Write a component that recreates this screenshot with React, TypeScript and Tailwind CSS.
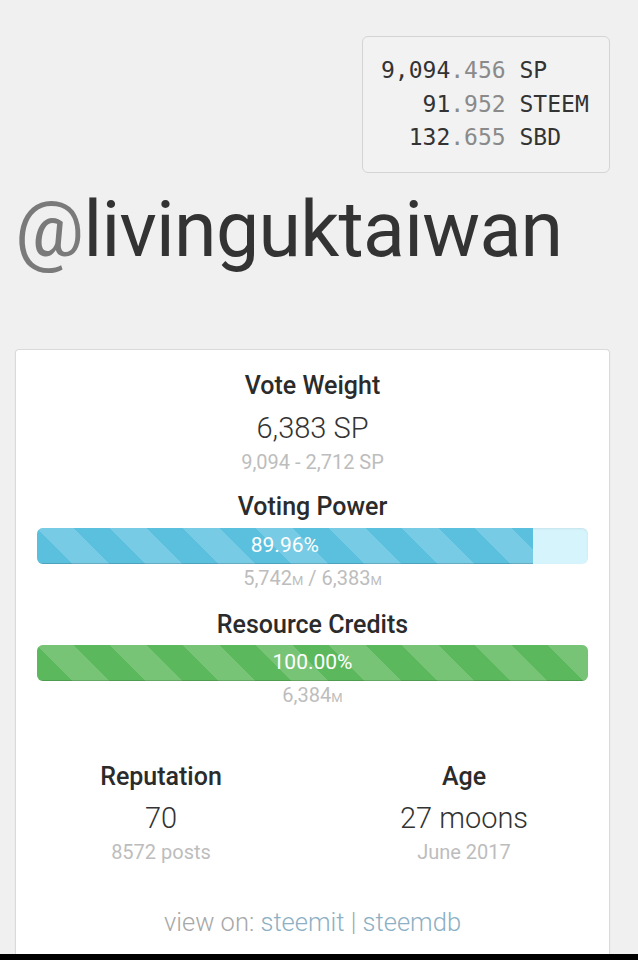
import React from "react";

const stripes =
  "bg-[linear-gradient(45deg,rgba(255,255,255,0.17)_25%,transparent_25%,transparent_50%,rgba(255,255,255,0.17)_50%,rgba(255,255,255,0.17)_75%,transparent_75%,transparent)] bg-size-[73px_73px]";

function Bar({ pct, label, color, track }: { pct: number; label: string; color: string; track: string }) {
  return (
    <div className={`h-[36px] rounded-[6px] overflow-hidden flex ${track} shadow-[inset_0_1px_2px_rgba(0,0,0,0.08)]`}>
      <div
        className={`h-full ${color} ${stripes} flex items-center justify-center text-white text-[21px] leading-none shadow-[inset_0_-1px_0_rgba(0,0,0,0.15)]`}
        style={{ width: `${pct}%` }}
      >
        {label}
      </div>
    </div>
  );
}

export default function App() {
  const roboto = { fontFamily: "Roboto, 'Noto Sans', sans-serif" };
  return (
    <div className="w-[638px] h-[960px] overflow-hidden bg-[#f0f0f0] flex flex-col" style={roboto}>
      <div className="flex justify-end pt-[36px] pr-[28px]">
        <div
          className="w-[248px] border border-[#d4d4d4] rounded-[6px] bg-[#f2f2f2] py-[17px] pl-[18px] text-[23px] leading-[33.5px] text-[#333333] whitespace-pre"
          style={{ fontFamily: "'DejaVu Sans Mono', monospace" }}
        >
          <div>9,094<span className="text-[#8a8a8a]">.456</span> SP</div>
          <div>   91<span className="text-[#8a8a8a]">.952</span> STEEM</div>
          <div>  132<span className="text-[#8a8a8a]">.655</span> SBD</div>
        </div>
      </div>

      <div className="mt-[18px] pl-[15px] text-[77px] leading-[78px] text-[#333333] tracking-[-0.7px]">
        <span className="text-[#7a7a7a]">@</span>livinguktaiwan
      </div>

      <div className="mt-[80px] ml-[15px] w-[595px] flex-1 bg-white border border-b-0 border-[#dadada] rounded-t-[4px] shadow-[0_1px_2px_rgba(0,0,0,0.05)] flex flex-col text-center">
        <div className="px-[21px] pt-[20px] flex flex-col">
          <div className="h-[32px] leading-[32px] text-[25px] font-medium text-[#2b2b2b]">Vote Weight</div>
          <div className="mt-[9px] h-[35px] leading-[35px] text-[29px] font-light text-[#333]">6,383 SP</div>
          <div className="mt-[4px] h-[24px] leading-[24px] text-[20px] text-[#bdbdbd]">9,094 - 2,712 SP</div>

          <div className="mt-[17px] h-[32px] leading-[32px] text-[25px] font-medium text-[#2b2b2b]">Voting Power</div>
          <div className="mt-[5px]">
            <Bar pct={89.96} label="89.96%" color="bg-[#5bc0de]" track="bg-[#d6f4fc]" />
          </div>
          <div className="mt-[2px] h-[24px] leading-[24px] text-[20px] text-[#bdbdbd]">
            5,742<span className="text-[13px]">M</span> / 6,383<span className="text-[13px]">M</span>
          </div>

          <div className="mt-[19px] h-[32px] leading-[32px] text-[25px] font-medium text-[#2b2b2b]">Resource Credits</div>
          <div className="mt-[4px]">
            <Bar pct={100} label="100.00%" color="bg-[#5cb85c]" track="bg-[#e6f5e6]" />
          </div>
          <div className="mt-[2px] h-[24px] leading-[24px] text-[20px] text-[#bdbdbd]">
            6,384<span className="text-[13px]">M</span>
          </div>
        </div>

        <div className="mt-[54px] flex gap-[13px]">
          <div className="w-[290px] flex flex-col">
            <div className="h-[32px] leading-[32px] text-[25px] font-medium text-[#2b2b2b]">Reputation</div>
            <div className="mt-[7px] h-[36px] leading-[36px] text-[29px] font-light text-[#333]">70</div>
            <div className="mt-[4px] h-[24px] leading-[24px] text-[20px] text-[#bdbdbd]">8572 posts</div>
          </div>
          <div className="w-[290px] flex flex-col">
            <div className="h-[32px] leading-[32px] text-[25px] font-medium text-[#2b2b2b]">Age</div>
            <div className="mt-[7px] h-[36px] leading-[36px] text-[29px] font-light text-[#333]">27 moons</div>
            <div className="mt-[4px] h-[24px] leading-[24px] text-[20px] text-[#bdbdbd]">June 2017</div>
          </div>
        </div>

        <div className="mt-[43px] h-[30px] leading-[30px] text-[25.5px] font-light text-[#a8a8a8]">
          view on: <span className="text-[#8db0c4]">steemit</span> | <span className="text-[#8db0c4]">steemdb</span>
        </div>
      </div>
      <div className="h-[6px] bg-black shrink-0" />
    </div>
  );
}
